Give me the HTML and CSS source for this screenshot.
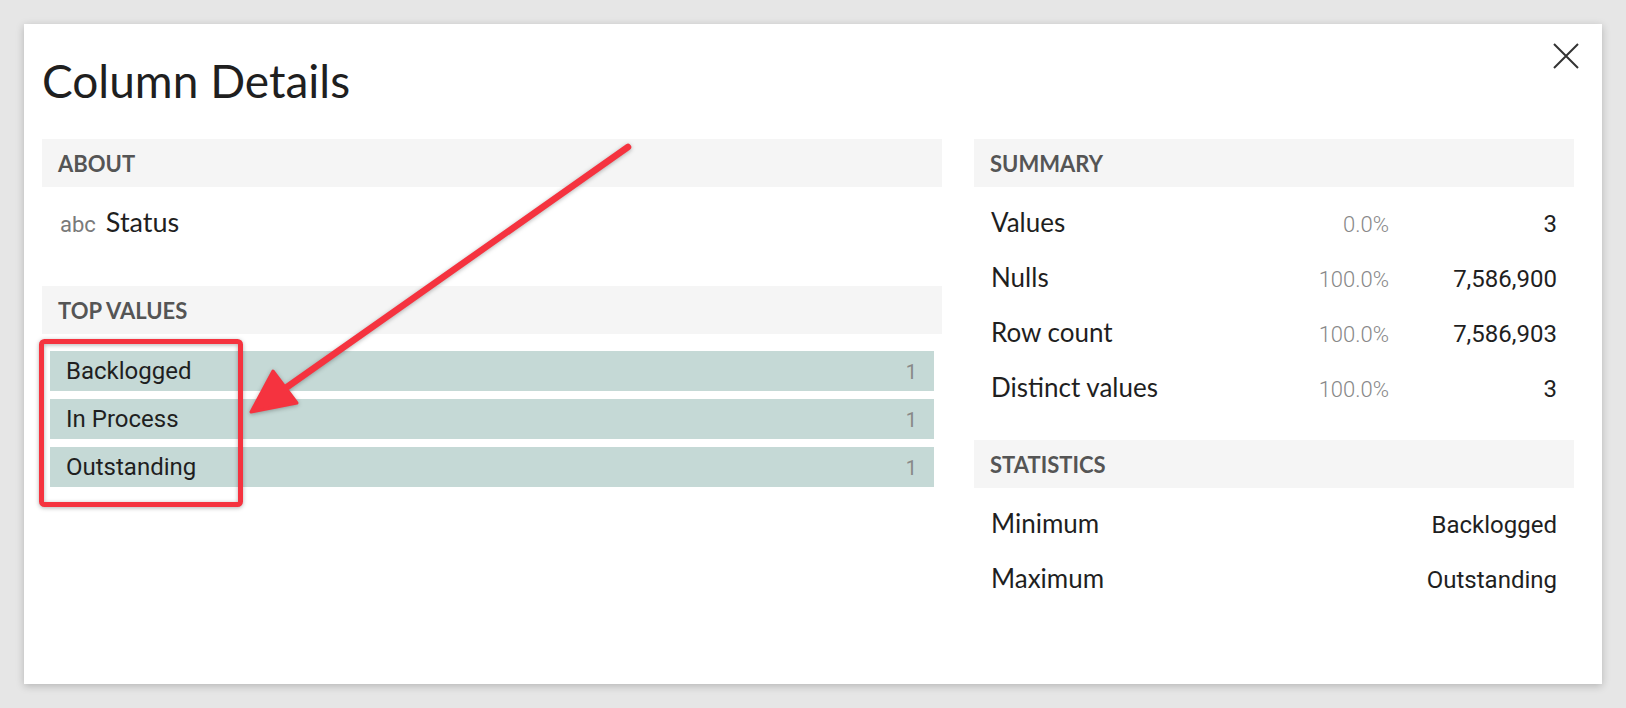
FILE: index.html
```html
<!DOCTYPE html>
<html lang="en">
<head>
<meta charset="utf-8">
<title>Column Details</title>
<link rel="stylesheet" href="styles.css">
</head>
<body>
<div class="page">
  <div class="dialog">
    <button class="close" aria-label="Close">
      <svg width="26" height="26" viewBox="0 0 26 26"><path d="M1 1 L25 25 M25 1 L1 25" stroke="#333" stroke-width="2" fill="none"/></svg>
    </button>
    <h1 class="title">Column Details</h1>
    <div class="columns">
      <div class="col-left">
        <div class="band">ABOUT</div>
        <div class="about-row"><span class="type">abc</span><span class="name">Status</span></div>
        <div class="band">TOP VALUES</div>
        <div class="bars">
          <div class="bar"><span>Backlogged</span><span class="count">1</span></div>
          <div class="bar"><span>In Process</span><span class="count">1</span></div>
          <div class="bar"><span>Outstanding</span><span class="count">1</span></div>
        </div>
      </div>
      <div class="col-right">
        <div class="band">SUMMARY</div>
        <div class="stats">
          <div class="srow"><span class="label">Values</span><span class="pct">0.0%</span><span class="val">3</span></div>
          <div class="srow"><span class="label">Nulls</span><span class="pct">100.0%</span><span class="val">7,586,900</span></div>
          <div class="srow"><span class="label">Row count</span><span class="pct">100.0%</span><span class="val">7,586,903</span></div>
          <div class="srow"><span class="label">Distinct values</span><span class="pct">100.0%</span><span class="val">3</span></div>
        </div>
        <div class="band band-stats">STATISTICS</div>
        <div class="stats">
          <div class="srow srow2"><span class="label">Minimum</span><span class="val">Backlogged</span></div>
          <div class="srow srow2"><span class="label">Maximum</span><span class="val">Outstanding</span></div>
        </div>
      </div>
    </div>
  </div>
  <svg class="annotation" width="1626" height="708" viewBox="0 0 1626 708">
    <rect x="41.5" y="341.5" width="199" height="163" rx="3" fill="none" stroke="#f5333f" stroke-width="5"/>
    <line x1="628" y1="147" x2="280" y2="392" stroke="#f5333f" stroke-width="6.5" stroke-linecap="round"/>
    <polygon points="251,412 273,371 297,403" fill="#f5333f" stroke="#f5333f" stroke-width="3" stroke-linejoin="round"/>
  </svg>
</div>
</body>
</html>
```

FILE: styles.css
```css
html, body {
  margin: 0;
  padding: 0;
  background: #e6e6e6;
}

.page {
  position: relative;
  width: 1626px;
  height: 708px;
  padding: 24px;
  box-sizing: border-box;
}

.dialog {
  position: relative;
  width: 1578px;
  height: 660px;
  box-sizing: border-box;
  background: #fff;
  padding: 29px 28px 0 18px;
  box-shadow: 0 2px 8px rgba(0, 0, 0, 0.22);
}

.close {
  position: absolute;
  top: 19px;
  right: 23px;
  width: 26px;
  height: 26px;
  padding: 0;
  border: 0;
  background: none;
  display: block;
}
.close svg { display: block; }

.title {
  margin: 0 0 30px 0;
  font-family: Lato, "Open Sans", sans-serif;
  font-weight: 400;
  font-size: 46px;
  line-height: 56px;
  color: #1f1f1f;
}

.columns {
  display: grid;
  grid-template-columns: 900px 600px;
  column-gap: 32px;
}

.band {
  height: 48px;
  background: #f5f5f5;
  display: flex;
  align-items: center;
  padding-left: 16px;
  font-family: Lato, "Open Sans", sans-serif;
  font-weight: 700;
  font-size: 22px;
  color: #555;
}
.band-stats {
  margin-top: 25px;
}

.about-row {
  padding-top: 20px;
  height: 30px;
  margin-bottom: 49px;
  display: flex;
  align-items: baseline;
  line-height: 30px;
  padding-left: 18px;
}
.type {
  font-family: Roboto, sans-serif;
  font-size: 22px;
  color: #7a7a7a;
  margin-right: 10px;
}
.name {
  font-family: Lato, "Open Sans", sans-serif;
  font-size: 27px;
  color: #1f1f1f;
}

.bars {
  padding: 17px 8px 0 8px;
  display: flex;
  flex-direction: column;
  gap: 8px;
}
.bar {
  height: 40px;
  background: #c5d9d6;
  display: flex;
  justify-content: space-between;
  align-items: baseline;
  padding: 0 17px 0 16px;
  font-family: Roboto, sans-serif;
  font-size: 24px;
  line-height: 40px;
  color: #1f1f1f;
}
.count {
  font-size: 20px;
  color: #888;
}

.stats {
  padding-top: 8px;
}
.srow {
  height: 55px;
  display: grid;
  grid-template-columns: 1fr 150px 168px;
  align-items: baseline;
  line-height: 55px;
  padding: 0 17px 0 17px;
}
.srow2 {
  grid-template-columns: 1fr auto;
}
.label {
  font-family: Lato, "Open Sans", sans-serif;
  font-size: 26px;
  color: #1f1f1f;
}
.pct {
  text-align: right;
  font-family: Roboto, sans-serif;
  font-weight: 300;
  font-size: 22px;
  color: #888;
}
.val {
  text-align: right;
  font-family: Roboto, sans-serif;
  font-size: 24px;
  color: #1f1f1f;
}

.annotation {
  position: absolute;
  left: 0;
  top: 0;
  pointer-events: none;
  filter: drop-shadow(0 1px 2px rgba(0, 0, 0, 0.3));
}
```
